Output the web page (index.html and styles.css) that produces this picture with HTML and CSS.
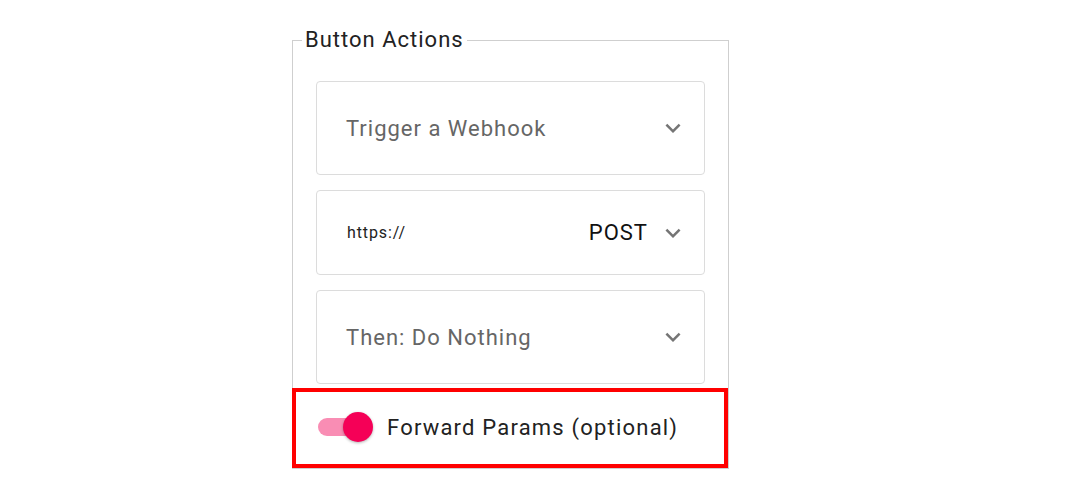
FILE: index.html
```html
<!DOCTYPE html>
<html lang="en">
<head>
  <meta charset="UTF-8">
  <meta name="viewport" content="width=device-width, initial-scale=1.0">
  <title>Button Actions</title>
  <link rel="stylesheet" href="styles.css">
</head>
<body>
  <fieldset class="actions">
    <legend>Button Actions</legend>

    <div class="select-box">
      <span class="select-value">Trigger a Webhook</span>
      <svg class="chevron" viewBox="0 0 24 24"><path d="M16.59 8.59 12 13.17 7.41 8.59 6 10l6 6 6-6z"/></svg>
    </div>

    <div class="select-box url-box">
      <span class="url">https://</span>
      <span class="method">POST</span>
      <svg class="chevron" viewBox="0 0 24 24"><path d="M16.59 8.59 12 13.17 7.41 8.59 6 10l6 6 6-6z"/></svg>
    </div>

    <div class="select-box">
      <span class="select-value">Then: Do Nothing</span>
      <svg class="chevron" viewBox="0 0 24 24"><path d="M16.59 8.59 12 13.17 7.41 8.59 6 10l6 6 6-6z"/></svg>
    </div>

    <div class="switch-row">
      <span class="switch">
        <span class="track"></span>
        <span class="thumb"></span>
      </span>
      <span class="switch-label">Forward Params (optional)</span>
    </div>
  </fieldset>
</body>
</html>
```

FILE: styles.css
```css
body {
  margin: 0;
  padding: 27px 0 0 292px;
  font-family: Roboto, 'Noto Sans', sans-serif;
  letter-spacing: 1px;
  background: #fff;
  color: #222;
}

.actions {
  width: 389px;
  margin: 0;
  padding: 28px 23px 0 23px;
  border: 1px solid #cfcfcf;
  display: flex;
  flex-direction: column;
  gap: 15px;
}

.actions legend {
  font-size: 22px;
  line-height: 26px;
  padding: 0 3px;
  margin-left: -14px;
  color: #222;
}

.select-box {
  box-sizing: border-box;
  height: 94px;
  border: 1px solid #dcdcdc;
  border-radius: 4px;
  display: flex;
  align-items: center;
  padding: 0 16px 0 29px;
}

.url-box {
  height: 85px;
  padding-left: 30px;
}

.select-value {
  flex: 1;
  font-size: 22px;
  color: #666;
}

.url {
  flex: 1;
  font-size: 16px;
  letter-spacing: 0.9px;
  color: #222;
}

.method {
  font-size: 22px;
  color: #111;
  margin-right: 10px;
}

.chevron {
  width: 30px;
  height: 30px;
  fill: #757575;
}

.switch-row {
  box-sizing: border-box;
  height: 80px;
  margin: -11px -23px 0 -24px;
  border: 4px solid #ff0000;
  display: flex;
  align-items: center;
  padding-left: 22px;
  padding-bottom: 2px;
}

.switch {
  position: relative;
  width: 56px;
  height: 30px;
  margin-right: 13px;
}

.track {
  position: absolute;
  left: 0;
  top: 6px;
  width: 48px;
  height: 18px;
  border-radius: 9px;
  background: #f98db4;
}

.thumb {
  position: absolute;
  left: 25px;
  top: 0;
  width: 30px;
  height: 30px;
  border-radius: 50%;
  background: #f50057;
  box-shadow: 0 1px 3px rgba(0, 0, 0, 0.3);
}

.switch-label {
  font-size: 22px;
  letter-spacing: 1.2px;
  color: #222;
}
```
